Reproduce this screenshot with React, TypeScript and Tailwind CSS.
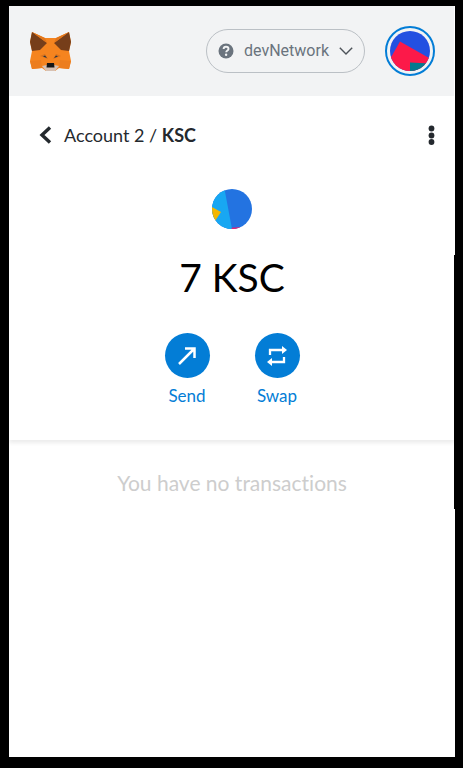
import React from "react";

function Fox() {
  return (
    <svg viewBox="0 0 41 39" className="h-[39px] w-[41px]" aria-hidden="true">
      <path d="M2 0 15 6H26L39 0 41 10 39 19 41 29 39 37 29 36 25 39H16L12 36 2 37 0 29 2 19 0 10Z" fill="#f5841f" />
      <path d="M2 0 17 11 10 18 2 19 0 10Z" fill="#763e1a" />
      <path d="M39 0 24 11 31 18 39 19 41 10Z" fill="#763e1a" />
      <path d="M2 0 15 6 17 11Z" fill="#e2761b" />
      <path d="M39 0 26 6 24 11Z" fill="#e2761b" />
      <path d="M0 29 11 28 12 36 2 37Z" fill="#ec7d1e" />
      <path d="M41 29 30 28 29 36 39 37Z" fill="#ec7d1e" />
      <path d="M10 24 15 22 18 27Z" fill="#d5721f" />
      <path d="M31 24 26 22 23 27Z" fill="#d5721f" />
      <path d="M13 24.500 15 23.500 17 26Z" fill="#233447" />
      <path d="M28 24.500 26 23.500 24 26Z" fill="#233447" />
      <path d="M12 34 17 33H24L29 34 25 39H16Z" fill="#d7c1b3" />
      <path d="M17 31H24L24.500 35.500H16.500Z" fill="#161616" />
    </svg>
  );
}

function AccountAvatar() {
  return (
    <svg viewBox="0 0 40 40" className="size-10 rounded-full" aria-hidden="true">
      <rect width="40" height="40" fill="#2350e1" />
      <path d="M10 10.500 40 27.500V40H0V28Z" fill="#fc1949" />
      <path d="M20 31.500 40 32.500V40H20Z" fill="#037a8f" />
    </svg>
  );
}

function TokenIcon() {
  return (
    <svg viewBox="0 0 40 40" className="size-10 rounded-full" aria-hidden="true">
      <rect width="40" height="40" fill="#2373e1" />
      <path d="M0 0H12.500L20 40H0Z" fill="#18a7f2" />
      <path d="M0 18 9 23 3 32H0Z" fill="#f2b602" />
      <path d="M19.500 38.800 28 38.300V40H20Z" fill="#fb1866" />
    </svg>
  );
}

function Action({ label, children }: { label: string; children: React.ReactNode }) {
  return (
    <button type="button" className="flex w-[90px] cursor-pointer flex-col items-center gap-2 text-[17px] leading-5 text-[#037dd6]">
      <span className="flex size-[45px] items-center justify-center rounded-full bg-[#037dd6]">{children}</span>
      {label}
    </button>
  );
}

export default function App() {
  return (
    <div className="flex min-h-screen bg-black pt-1.5 pr-2 pb-[11px] pl-[9px] font-['Lato',sans-serif] [font-variant-ligatures:none]">
      <div className="relative flex flex-1 flex-col bg-white">
        <header className="mr-px flex h-[90px] items-center justify-between bg-[#f2f3f4] pr-[19px] pl-[21px]">
          <a href="#home" aria-label="Home"><Fox /></a>
          <div className="flex items-center gap-5">
            <button type="button" className="flex h-11 items-center gap-2.5 rounded-full border border-[#bbc0c5] px-[11px] font-['Roboto',sans-serif] text-[16px] leading-5 text-[#6a737d]">
              <svg viewBox="0 0 16 16" className="size-4" aria-hidden="true">
                <circle cx="8" cy="8" r="7.500" fill="#6a737d" />
                <path d="M5.600 6C5.700 4.500 6.600 3.800 8 3.800S10.500 4.600 10.500 5.900C10.500 7.400 8.200 7.500 8.200 9.200" fill="none" stroke="#f2f3f4" strokeWidth="1.900" />
                <circle cx="8.100" cy="11.700" r="1.200" fill="#f2f3f4" />
              </svg>
              <span>devNetwork</span>
              <svg viewBox="0 0 14 8" className="h-2 w-3.5" fill="none" stroke="#4d5359" strokeWidth="1.400" aria-hidden="true">
                <path d="m.8.800 6.200 6.200L13.200.8" />
              </svg>
            </button>
            <button type="button" aria-label="Account menu" className="flex size-[50px] items-center justify-center rounded-full border-2 border-[#037dd6]">
              <AccountAvatar />
            </button>
          </div>
        </header>

        <nav className="flex h-[78px] items-center justify-between pr-5 pl-[30px] text-[18px] leading-6 text-[#24292e]">
          <div className="flex items-center gap-3">
            <button type="button" aria-label="Back">
              <svg viewBox="0 0 13 18" className="h-[18px] w-[13px]" fill="none" stroke="#24292e" strokeWidth="3.400" aria-hidden="true">
                <path d="M11 1.500 3 9l8 7.500" />
              </svg>
            </button>
            <div>Account 2 / <b>KSC</b></div>
          </div>
          <button type="button" aria-label="Token options">
            <svg viewBox="0 0 7 20" className="h-5 w-[7px]" fill="#24292e" aria-hidden="true">
              <circle cx="3.500" cy="3.500" r="2.900" />
              <circle cx="3.500" cy="10.500" r="2.900" />
              <circle cx="3.500" cy="17" r="2.900" />
            </svg>
          </button>
        </nav>

        <main className="flex flex-col">
          <section className="flex h-[266px] flex-col items-center pt-[15px] shadow-[0_3px_4px_rgba(0,0,0,0.08)]">
            <TokenIcon />
            <h1 className="mt-6 text-[39px] leading-12 text-black">7 KSC</h1>
            <div className="mt-8 flex">
              <Action label="Send">
                <svg viewBox="0 0 18 18" className="size-[18px]" fill="none" stroke="white" strokeWidth="2.500" aria-hidden="true">
                  <path d="M1 17 16 2M7 1.600H16.500V11" />
                </svg>
              </Action>
              <Action label="Swap">
                <svg viewBox="0 0 20 22" className="h-[22px] w-5" fill="none" stroke="white" strokeWidth="2.300" aria-hidden="true">
                  <path d="M3 10V5H16M17 12v5H4" />
                  <path d="m15 1 5 4-5 4ZM5 13l-5 4 5 4Z" fill="white" stroke="none" />
                </svg>
              </Action>
            </div>
          </section>
          <p className="pt-7 text-center text-[21px] leading-[30px] text-[#cdcdcd]">You have no transactions</p>
        </main>
        <div className="absolute top-[249px] right-0 h-[254px] w-px bg-black" />
      </div>
    </div>
  );
}
